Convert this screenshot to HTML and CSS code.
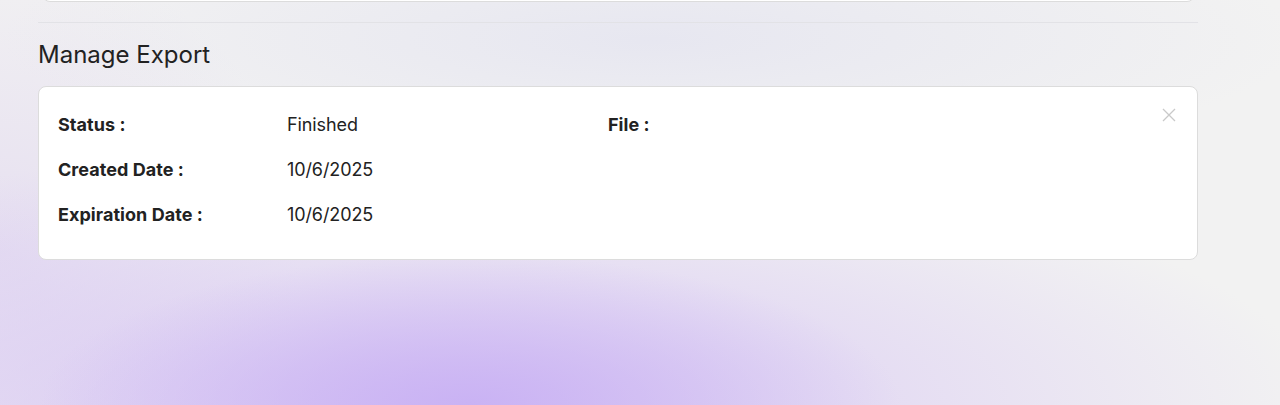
FILE: index.html
```html
<!DOCTYPE html>
<html lang="en">
<head>
    <meta charset="UTF-8">
    <meta name="viewport" content="width=device-width, initial-scale=1.0">
    <title>Manage Export</title>
    <link rel="stylesheet" href="styles.css">
</head>
<body>
    <div class="page">
        <div class="prev-card"></div>
        <hr class="divider">
        <h2 class="title">Manage Export</h2>
        <div class="export-card">
            <button class="close" aria-label="Close">
                <svg width="14" height="14" viewBox="0 0 14 14">
                    <path d="M1 1 L13 13 M13 1 L1 13" stroke="#c9c9c9" stroke-width="1.3" fill="none"/>
                </svg>
            </button>
            <div class="details">
                <div class="label">Status :</div>
                <div class="value">Finished</div>
                <div class="label">File :</div>
                <div class="value"></div>

                <div class="label">Created Date :</div>
                <div class="value">10/6/2025</div>
                <div></div>
                <div></div>

                <div class="label">Expiration Date :</div>
                <div class="value">10/6/2025</div>
                <div></div>
                <div></div>
            </div>
        </div>
    </div>
</body>
</html>
```

FILE: styles.css
```css
html, body {
    height: 100%;
}
body {
    margin: 0;
    font-family: Inter, "Noto Sans", sans-serif;
    color: #222;
    background-color: #f2f2f2;
    background-image:
        radial-gradient(ellipse 430px 150px at 470px 405px, rgba(200, 176, 244, 0.9), rgba(200, 176, 244, 0) 100%),
        radial-gradient(ellipse 900px 260px at 420px 405px, rgba(214, 196, 244, 0.95), rgba(214, 196, 244, 0) 100%),
        radial-gradient(ellipse 650px 130px at 650px 40px, rgba(228, 228, 240, 0.8), rgba(228, 228, 240, 0) 100%),
        radial-gradient(ellipse 300px 300px at 0px 250px, rgba(225, 215, 240, 0.7), rgba(225, 215, 240, 0) 100%);
    overflow: hidden;
}
.page {
    padding: 0 82px 0 38px;
}
.prev-card {
    height: 20px;
    margin: -20px 3px 0 4px;
    background: #fff;
    border: 1px solid #dcdcdc;
    border-radius: 8px;
}
.divider {
    border: none;
    border-top: 1px solid #e2e2e6;
    margin: 20px 0 0;
}
.title {
    font-size: 24px;
    font-weight: 400;
    letter-spacing: 0;
    margin: 17px 0 0;
    line-height: 30px;
    color: #222;
}
.export-card {
    position: relative;
    margin-top: 16px;
    background: #fff;
    border: 1px solid #dcdcdc;
    border-radius: 8px;
    padding: 15px 19px 22px;
}
.close {
    position: absolute;
    top: 21px;
    right: 21px;
    border: none;
    background: none;
    padding: 0;
    width: 14px;
    height: 14px;
    cursor: pointer;
}
.close svg {
    display: block;
}
.details {
    display: grid;
    grid-template-columns: 229px 321px 1fr 1fr;
    grid-auto-rows: 45px;
    align-items: center;
}
.label {
    font-size: 18px;
    font-weight: 700;
    letter-spacing: 0.05px;
}
.value {
    font-size: 18px;
    font-weight: 400;
    letter-spacing: -0.1px;
}
```
